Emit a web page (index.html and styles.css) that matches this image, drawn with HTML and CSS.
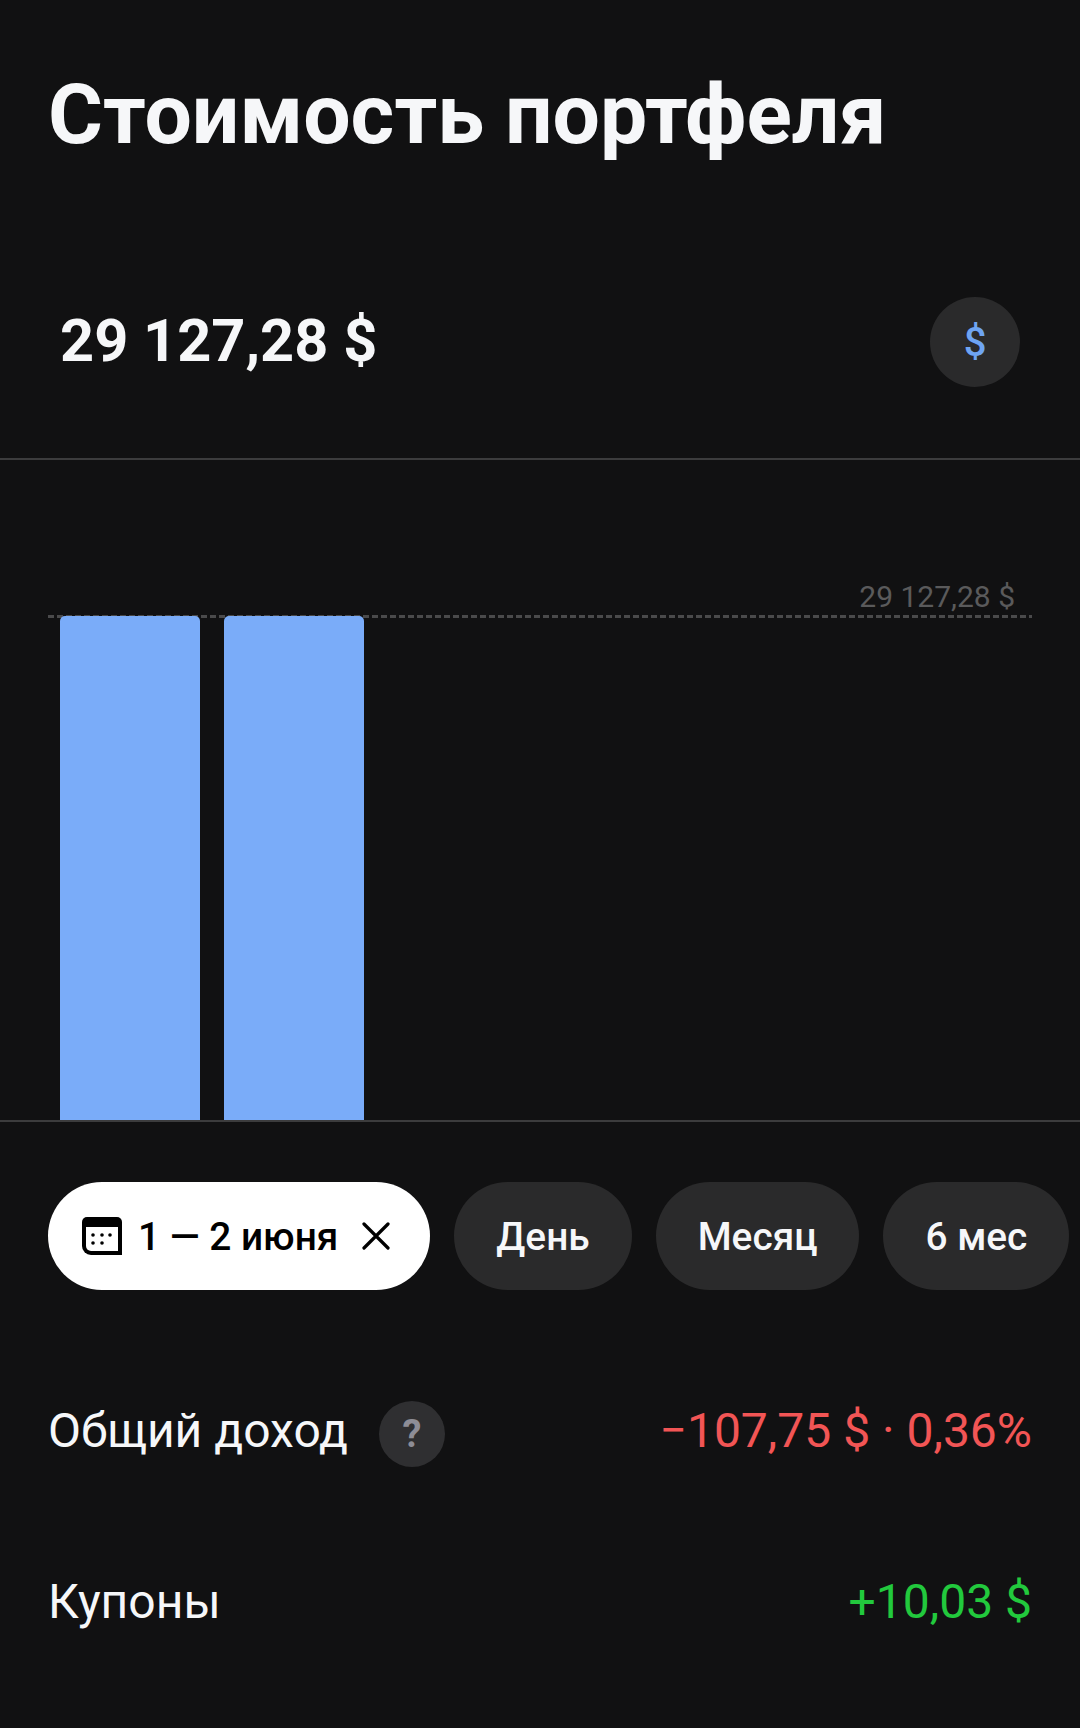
FILE: index.html
```html
<!DOCTYPE html>
<html lang="ru">
<head>
    <meta charset="UTF-8">
    <meta name="viewport" content="width=device-width, initial-scale=1.0">
    <title>Стоимость портфеля</title>
    <link rel="stylesheet" href="styles.css">
</head>
<body>
    <div class="container">
        <h1 class="title">Стоимость портфеля</h1>

        <div class="total">
            <span class="total-value">29 127,28 $</span>
            <div class="currency">$</div>
        </div>

        <div class="chart">
            <div class="chart-label">29 127,28 $</div>
            <div class="chart-bars">
                <div class="bar"></div>
                <div class="bar"></div>
            </div>
        </div>

        <div class="chips">
            <div class="chip chip-active">
                <svg class="chip-calendar" width="40" height="38" viewBox="0 0 40 38">
                    <path d="M0 10V5a5 5 0 0 1 5-5h30a5 5 0 0 1 5 5v33H9a9 9 0 0 1-9-9z" fill="#000"/>
                    <path d="M4 10h32v24H9a5 5 0 0 1-5-5z" fill="#fff"/>
                    <circle cx="11" cy="18" r="1.8" fill="#000"/>
                    <circle cx="20" cy="18" r="1.8" fill="#000"/>
                    <circle cx="28" cy="18" r="1.8" fill="#000"/>
                    <circle cx="11" cy="26" r="1.8" fill="#000"/>
                    <circle cx="20" cy="26" r="1.8" fill="#000"/>
                </svg>
                <span>1 — 2 июня</span>
                <svg class="chip-close" width="28" height="28" viewBox="0 0 28 28">
                    <path d="M2 2l24 24M26 2L2 26" stroke="#000" stroke-width="3.2" stroke-linecap="round"/>
                </svg>
            </div>
            <div class="chip">День</div>
            <div class="chip">Месяц</div>
            <div class="chip">6 мес</div>
        </div>

        <div class="row row-income">
            <div class="row-name">
                <span>Общий доход</span>
                <div class="help">?</div>
            </div>
            <span class="negative">−107,75 $ · 0,36%</span>
        </div>

        <div class="row row-coupons">
            <span>Купоны</span>
            <span class="positive">+10,03 $</span>
        </div>
    </div>
</body>
</html>
```

FILE: styles.css
```css
body {
    font-family: Roboto, "Noto Sans", sans-serif;
    margin: 0;
    padding: 0;
    background-color: #111112;
    color: #f6f7f9;
}
.container {
    width: 1080px;
    height: 1728px;
    overflow: hidden;
}
.title {
    margin: 0;
    padding: 65px 48px 0;
    font-size: 84px;
    line-height: 100px;
    font-weight: 700;
    white-space: nowrap;
}
.total {
    display: flex;
    justify-content: space-between;
    align-items: center;
    margin-top: 132px;
    padding: 0 60px;
}
.total-value {
    font-size: 59.5px;
    font-weight: 700;
    margin-bottom: 2px;
}
.currency {
    display: flex;
    align-items: center;
    justify-content: center;
    width: 90px;
    height: 90px;
    border-radius: 50%;
    background-color: #2a2a2b;
    color: #6ea4f2;
    font-size: 40px;
    font-weight: 500;
}
.chart {
    position: relative;
    margin-top: 71px;
    height: 660px;
    border-top: 2px solid #3c3c3d;
    border-bottom: 2px solid #3c3c3d;
    display: flex;
    align-items: flex-end;
}
.chart-label {
    position: absolute;
    right: 65px;
    top: 119px;
    font-size: 30px;
    line-height: 36px;
    color: #5a5a5b;
}
.chart-label::after {
    content: "";
    position: absolute;
    top: 36px;
    right: -17px;
    width: 984px;
    height: 3px;
    background: repeating-linear-gradient(90deg, #4a4a4b 0 6px, transparent 6px 9px);
}
.chart-bars {
    display: flex;
    gap: 24px;
    padding-left: 60px;
}
.bar {
    position: relative;
    width: 140px;
    height: 504px;
    background-color: #7aacf9;
    border-radius: 5px 5px 0 0;
}
.chips {
    display: flex;
    gap: 24px;
    margin-top: 60px;
    padding-left: 48px;
}
.chip {
    display: flex;
    align-items: center;
    flex-shrink: 0;
    height: 108px;
    padding: 0 42px;
    border-radius: 54px;
    background-color: #2a2a2b;
    font-size: 38.8px;
    font-weight: 500;
    white-space: nowrap;
}
.chip-active {
    padding: 0 40px 0 34px;
    background-color: #fff;
    color: #000;
}
.chip-calendar {
    margin-right: 16px;
}
.chip-close {
    margin-left: 24px;
}
.row {
    display: flex;
    justify-content: space-between;
    align-items: center;
    padding: 0 48px;
    font-size: 48px;
}
.row-income {
    margin-top: 107px;
    height: 66px;
}
.row-coupons {
    margin-top: 105px;
    height: 66px;
}
.row-name {
    display: flex;
    align-items: center;
    gap: 31px;
}
.help {
    display: flex;
    align-items: center;
    justify-content: center;
    width: 66px;
    height: 66px;
    margin-top: 8px;
    border-radius: 50%;
    background-color: #2f2f31;
    color: #8d8d96;
    font-size: 38px;
    font-weight: 700;
}
.negative {
    color: #f25555;
}
.positive {
    color: #22c93d;
}
```
